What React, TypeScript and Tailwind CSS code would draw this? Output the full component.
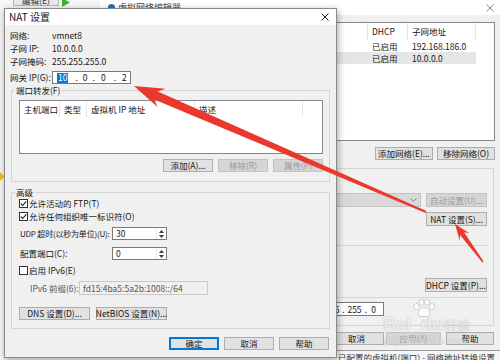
import React from "react";

type Kids = { children?: React.ReactNode };

function Btn({
  children,
  className = "",
  disabled = false,
  primary = false,
}: Kids & { className?: string; disabled?: boolean; primary?: boolean }) {
  const tone = disabled
    ? "border-[#c4c4c4] bg-[#d5d5d5] text-[#9b9b9b]"
    : primary
      ? "border-[#0078d7] bg-[#e1e1e1] text-[#151515] shadow-[inset_0_0_0_1px_#0078d7]"
      : "border-[#adadad] bg-[#e1e1e1] text-[#151515]";
  return (
    <div className={`flex shrink-0 items-center justify-center border ${tone} ${className}`}>
      {children}
    </div>
  );
}

function Check({ checked = false, children }: Kids & { checked?: boolean }) {
  return (
    <div className="flex h-[11px] items-center">
      <span className="flex h-[9px] w-[9px] shrink-0 items-center justify-center border border-[#333] bg-white">
        {checked && (
          <svg width="7" height="7" viewBox="0 0 7 7">
            <path d="M0.8 3.6 L2.7 5.5 L6.3 1.3" fill="none" stroke="#222" strokeWidth="1.1" />
          </svg>
        )}
      </span>
      <span className="ml-[1px]">{children}</span>
    </div>
  );
}

function Radio({ checked = false, children }: Kids & { checked?: boolean }) {
  return (
    <div className="flex items-center">
      <span className="flex h-[9px] w-[9px] shrink-0 items-center justify-center rounded-full border border-[#333] bg-white">
        {checked && <span className="h-[5px] w-[5px] rounded-full bg-[#222]" />}
      </span>
      <span className="ml-[3px]">{children}</span>
    </div>
  );
}

function SpinBox({ value }: { value: string }) {
  return (
    <div className="flex h-[13px] w-[55px] shrink-0 border border-[#7a7a7a] bg-white">
      <span className="flex flex-1 items-center pl-[3px]">{value}</span>
      <div className="flex w-[10px] flex-col items-center justify-center gap-[2px] border-l border-[#e6e6e6]">
        <svg width="5" height="3" viewBox="0 0 5 3">
          <path d="M0 3 L2.5 0 L5 3 Z" fill="#3a3a3a" />
        </svg>
        <svg width="5" height="3" viewBox="0 0 5 3">
          <path d="M0 0 L5 0 L2.5 3 Z" fill="#3a3a3a" />
        </svg>
      </div>
    </div>
  );
}

function CloseX({ color }: { color: string }) {
  return (
    <svg width="8" height="8" viewBox="0 0 8 8">
      <path d="M0.5 0.5 L7.5 7.5 M7.5 0.5 L0.5 7.5" stroke={color} strokeWidth="1" />
    </svg>
  );
}

function MainWindowBits() {
  return (
    <>
      <div className="absolute left-[13px] top-[-6px] flex h-[12px] w-[46px] items-center justify-center border border-[#b9b9b9] bg-[#e8e8e8] text-[#333]">
        编辑(E)
      </div>
      <svg className="absolute left-[61px] top-0" width="10" height="7" viewBox="0 0 10 7">
        <path d="M1 -2 L9 2.5 L1 7 Z" fill="#3fae3b" />
      </svg>
      <div className="absolute left-[-4px] top-[173px] h-[7px] w-[7px] rotate-45 bg-[#f0c419]" />
      <div className="absolute left-[338px] top-[353px] text-[#333]">已配置的虚拟机(端口) - 网络地址转换设置</div>
    </>
  );
}

function NetworkEditor() {
  const cols = [
    ["名称", "w-[80px]"],
    ["类型", "w-[75px]"],
    ["外部连接", "w-[102px]"],
    ["DHCP", "w-[40px]"],
    ["子网地址", "w-[68px]"],
  ];
  const rows = [
    ["VMnet1", "仅主机...", "-", "已启用", "192.168.186.0"],
    ["VMnet8", "NAT 模式", "NAT 模式", "已启用", "10.0.0.0"],
  ];
  return (
    <div className="absolute left-[100px] top-0 flex h-[351px] w-[400px] flex-col border-b border-[#9a9a9a] bg-[#f0f0f0]">
      <div className="flex h-[15px] shrink-0 items-center bg-white pl-[8px] pr-[6px]">
        <span className="h-[7px] w-[7px] rounded-full bg-[#1f6fc5]" />
        <span className="ml-[3px] text-[9px] text-[#444]">虚拟网络编辑器</span>
        <span className="ml-auto flex">
          <CloseX color="#8a8a8a" />
        </span>
      </div>
      <div className="flex flex-1 flex-col pl-[10px] pr-[5px]">
        <div className="mt-[7px] flex h-[119px] flex-col border border-[#828790] bg-white">
          <div className="flex h-[17px] shrink-0">
            {cols.map(([t, w]) => (
              <div key={t} className={`flex items-center border-r border-[#e5e5e5] pl-[4px] ${w}`}>
                {t}
              </div>
            ))}
          </div>
          {rows.map((r, i) => (
            <div key={r[0]} className={`flex h-[12px] w-fit ${i === 1 ? "bg-[#e5e5e5]" : ""}`}>
              {r.map((c, j) => (
                <div key={j} className={`flex items-center pl-[4px] ${cols[j][1]}`}>
                  {c}
                </div>
              ))}
            </div>
          ))}
        </div>

        <div className="mt-[6px] flex justify-end gap-[4px]">
          <Btn className="h-[13px] w-[58px]">添加网络(E)...</Btn>
          <Btn className="h-[13px] w-[58px]">移除网络(O)</Btn>
        </div>

        <fieldset className="mr-[1px] mt-[2px] border border-[#d5d5d5]">
          <legend className="ml-[3px] px-[1px] leading-[12px]">VMnet 信息</legend>
          <div className="flex flex-col pb-[9px] pl-[7px] pr-[6px]">
            <div className="flex h-[14px] items-center">
              <Radio>桥接模式(将虚拟机直接连接到外部网络)(B)</Radio>
            </div>
            <div className="mt-[5px] flex h-[14px] items-center">
              <span className="w-[70px] shrink-0 pl-[12px] text-[#8d8d8d]">已桥接至(G):</span>
              <div className="flex h-[14px] flex-1 items-center justify-end border border-[#c4c4c4] bg-[#d9d9d9] pr-[3px]">
                <svg width="7" height="4" viewBox="0 0 7 4">
                  <path d="M0.5 0.5 L3.5 3.5 L6.5 0.5" fill="none" stroke="#8a8a8a" strokeWidth="1" />
                </svg>
              </div>
              <Btn disabled className="ml-[5px] h-[14px] w-[61px]">
                自动设置(U)...
              </Btn>
            </div>
            <div className="mt-[5px] flex h-[14px] items-center">
              <Radio checked>NAT 模式(与虚拟机共享主机的 IP 地址)(N)</Radio>
              <Btn className="ml-auto h-[14px] w-[61px]">NAT 设置(S)...</Btn>
            </div>
            <div className="mt-[5px] flex h-[10px] items-center">
              <Radio>仅主机模式(在专用网络内连接虚拟机)(H)</Radio>
            </div>
            <div className="mt-[4px] border-t border-[#d5d5d5]" />
            <div className="mt-[5px]">
              <Check checked>将主机虚拟适配器连接到此网络(V)</Check>
            </div>
            <div className="mt-[2px] flex h-[11px] items-center pl-[12px]">
              主机虚拟适配器名称: VMware 网络适配器 VMnet8
            </div>
            <div className="mt-[3px] flex h-[14px] items-center">
              <Check checked>使用本地 DHCP 服务将 IP 地址分配给虚拟机(D)</Check>
              <Btn className="ml-auto h-[14px] w-[62px]">DHCP 设置(P)...</Btn>
            </div>
            <div className="mt-[5px] border-t border-[#d5d5d5]" />
            <div className="mt-[4px] flex h-[14px] items-center justify-end pr-[103px]">
              <div className="flex h-[14px] w-[84px] shrink-0 items-center justify-end border border-[#7a7a7a] bg-white pr-[5px]">
                <span className="w-[17px] text-center">255</span>
                <span className="w-[5px] text-center">.</span>
                <span className="w-[17px] text-center">255</span>
                <span className="w-[5px] text-center">.</span>
                <span className="w-[17px] text-center">255</span>
                <span className="w-[6px] text-center">.</span>
                <span className="w-[9px] text-center">0</span>
              </div>
            </div>
          </div>
        </fieldset>

        <div className="mt-[6px] flex justify-end pr-[1px]">
          <Btn className="h-[13px] w-[55px]">取消</Btn>
          <Btn disabled className="ml-[2px] h-[13px] w-[55px]">
            应用(A)
          </Btn>
          <Btn className="ml-[5px] h-[13px] w-[48px]">帮助</Btn>
        </div>
      </div>
    </div>
  );
}

function NatDialog() {
  const info = [
    ["网络:", "vmnet8"],
    ["子网 IP:", "10.0.0.0"],
    ["子网掩码:", "255.255.255.0"],
  ];
  const cols = [
    ["主机端口", "w-[40px]"],
    ["类型", "w-[27px]"],
    ["虚拟机 IP 地址", "w-[108px]"],
    ["描述", "w-[108px]"],
  ];
  return (
    <div className="absolute left-[4px] top-[8px] flex h-[350px] w-[333px] flex-col border border-[#8a8a8a] bg-[#f0f0f0] shadow-[1px_2px_7px_rgba(0,0,0,0.35)]">
      <div className="flex h-[16px] shrink-0 items-center justify-between bg-white pl-[4px] pr-[7px]">
        <span className="text-[10px]">NAT 设置</span>
        <CloseX color="#1f1f1f" />
      </div>

      <div className="mt-[4px] flex flex-col px-[5px]">
        {info.map(([k, v]) => (
          <div key={k} className="flex h-[13px] items-center">
            <span className="w-[42px] shrink-0">{k}</span>
            <span>{v}</span>
          </div>
        ))}
        <div className="mt-[3px] flex h-[13px] items-center">
          <span className="w-[42px] shrink-0">网关 IP(G):</span>
          <div className="flex h-[13px] w-[79px] items-center border border-[#7a7a7a] bg-white">
            <span className="ml-[4px] flex h-[10px] items-center bg-[#0078d7] px-[1px] text-white">10</span>
            <span className="ml-[7px]">.</span>
            <span className="ml-[5px]">0</span>
            <span className="ml-[5px]">.</span>
            <span className="ml-[6px]">0</span>
            <span className="ml-[8px]">.</span>
            <span className="ml-[6px]">2</span>
          </div>
        </div>
      </div>

      <fieldset className="mx-[6px] border border-[#d5d5d5]">
        <legend className="ml-[3px] px-[1px] leading-[12px]">端口转发(F)</legend>
        <div className="flex flex-col pb-[9px] pl-[7px] pr-[6px] pt-[4px]">
          <div className="flex h-[54px] flex-col border border-[#828790] bg-white">
            <div className="flex h-[16px]">
              {cols.map(([t, w]) => (
                <div key={t} className={`flex items-center border-r border-[#e5e5e5] pl-[4px] ${w}`}>
                  {t}
                </div>
              ))}
            </div>
          </div>
          <div className="mt-[5px] flex justify-end gap-[5px]">
            <Btn className="h-[13px] w-[50px]">添加(A)...</Btn>
            <Btn disabled className="h-[13px] w-[50px]">
              移除(R)
            </Btn>
            <Btn disabled className="h-[13px] w-[50px]">
              属性(P)
            </Btn>
          </div>
        </div>
      </fieldset>

      <fieldset className="mx-[6px] mt-[4px] border border-[#d5d5d5]">
        <legend className="ml-[3px] px-[1px] leading-[12px]">高级</legend>
        <div className="flex flex-col pb-[8px] pl-[7px] pr-[6px]">
          <Check checked>允许活动的 FTP(T)</Check>
          <div className="mt-[2px]">
            <Check checked>允许任何组织唯一标识符(O)</Check>
          </div>
          <div className="mt-[5px] flex h-[13px] items-center">
            <span className="w-[93px] shrink-0 pl-[1px] text-[8px] tracking-[-0.2px]">UDP 超时(以秒为单位)(U):</span>
            <SpinBox value="30" />
          </div>
          <div className="mt-[7px] flex h-[13px] items-center">
            <span className="w-[93px] shrink-0 pl-[1px]">配置端口(C):</span>
            <SpinBox value="0" />
          </div>
          <div className="mt-[5px]">
            <Check>启用 IPv6(E)</Check>
          </div>
          <div className="mt-[5px] flex h-[14px] items-center">
            <span className="w-[60px] shrink-0 pl-[11px] text-[#555]">IPv6 前缀(6):</span>
            <div className="flex h-[14px] w-[129px] items-center border border-[#c8c8c8] pl-[3px] text-[#555]">
              fd15:4ba5:5a2b:1008::/64
            </div>
          </div>
          <div className="mt-[12px] flex gap-[6px]">
            <Btn className="h-[13px] w-[71px]">DNS 设置(D)...</Btn>
            <Btn className="h-[13px] w-[71px]">NetBIOS 设置(N)...</Btn>
          </div>
        </div>
      </fieldset>

      <div className="mt-[8px] flex justify-end gap-[5px] pr-[7px]">
        <Btn primary className="h-[13px] w-[50px]">
          确定
        </Btn>
        <Btn className="h-[13px] w-[50px]">取消</Btn>
        <Btn className="h-[13px] w-[50px]">帮助</Btn>
      </div>
    </div>
  );
}

function Arrows() {
  return (
    <svg className="pointer-events-none absolute left-0 top-0" width="500" height="360" viewBox="0 0 500 360">
      <polygon
        points="134,86 165.5,88.7 157.8,91.4 426.4,211.1 425.6,212.9 154.3,99.6 157.6,107.1"
        fill="#e8392c"
      />
      <polygon
        points="455,224 469.3,233.3 464.1,232.2 483.6,261.5 482.4,262.5 460.1,235.1 459.7,240.4"
        fill="#e8392c"
      />
    </svg>
  );
}

function Watermark() {
  return (
    <div className="pointer-events-none absolute left-[383px] top-[299px] h-[50px] w-[100px] text-white/80 [text-shadow:0_0_1px_rgba(80,80,80,0.55)]">
      <svg className="absolute left-[29px] top-0" width="24" height="19" viewBox="0 0 24 19">
        <g fill="rgba(255,255,255,0.8)" stroke="rgba(120,120,120,0.5)" strokeWidth="0.6">
          <ellipse cx="4.5" cy="7.5" rx="2.5" ry="3.1" />
          <ellipse cx="9.5" cy="3.3" rx="2.5" ry="3.1" />
          <ellipse cx="15" cy="3.3" rx="2.5" ry="3.1" />
          <ellipse cx="20" cy="7.5" rx="2.5" ry="3.1" />
          <path d="M12 8.5 C8.5 8.5 5.5 13 6 15.5 C6.5 18 9.5 17.5 12 17.5 C14.5 17.5 17.5 18 18 15.5 C18.5 13 15.5 8.5 12 8.5 Z" />
        </g>
      </svg>
      <div className="absolute left-0 top-[16px] flex items-baseline">
        <span className="font-['Liberation_Sans',sans-serif] text-[18px] font-bold leading-none">Bai</span>
        <span className="ml-[10px] font-['Liberation_Sans',sans-serif] text-[18px] font-bold leading-none">du</span>
        <span className="ml-[1px] text-[13px] leading-none">经验</span>
      </div>
      <div className="absolute left-[1px] top-[38px] font-['Liberation_Sans',sans-serif] text-[9px] tracking-[0.6px]">
        jingyan.baidu.com
      </div>
    </div>
  );
}

export default function App() {
  return (
    <div className="relative h-[360px] w-[500px] overflow-hidden whitespace-nowrap bg-[#f6f6f6] font-['Noto_Sans_CJK_SC',sans-serif] text-[8.5px] leading-none text-[#161616]">
      <MainWindowBits />
      <NetworkEditor />
      <NatDialog />
      <Arrows />
      <Watermark />
    </div>
  );
}
